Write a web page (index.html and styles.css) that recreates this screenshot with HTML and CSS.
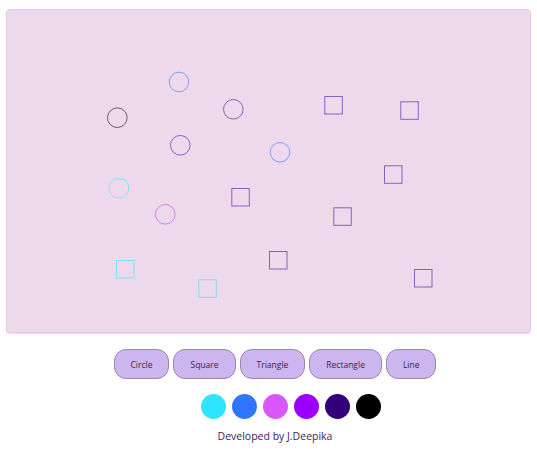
FILE: index.html
```html
<!DOCTYPE html>
<html>
<head>
<meta charset="utf-8">
<link rel="stylesheet" href="styles.css">
</head>
<body>
<div class="page">
  <div class="board">
    <svg class="drawing" viewBox="0 0 525 324" width="525" height="324">
      <g fill="none" stroke-width="1">
        <circle cx="173" cy="73" r="9.8" stroke="#7f9ff7"/>
        <circle cx="111.3" cy="108.7" r="9.8" stroke="#6e5a73"/>
        <circle cx="227.3" cy="100.3" r="9.8" stroke="#8f5fbd"/>
        <circle cx="174.3" cy="136.3" r="9.8" stroke="#8f5fbd"/>
        <circle cx="274" cy="143.3" r="9.8" stroke="#7f9ff7"/>
        <circle cx="113" cy="179.3" r="9.8" stroke="#7fe3f3"/>
        <circle cx="159.3" cy="205.3" r="9.8" stroke="#d880ef"/>
        <rect x="318.8" y="87.5" width="17.5" height="17.5" stroke="#8c5fbf"/>
        <rect x="394.8" y="92.8" width="17.5" height="17.5" stroke="#8c5fbf"/>
        <rect x="378.5" y="156.8" width="17.5" height="17.5" stroke="#8c5fbf"/>
        <rect x="225.8" y="179.5" width="17.5" height="17.5" stroke="#8c5fbf"/>
        <rect x="263.5" y="242.5" width="17.5" height="17.5" stroke="#8c5fbf"/>
        <rect x="110.5" y="251.5" width="17.5" height="17.5" stroke="#80dff2"/>
        <rect x="192.8" y="270.8" width="17.5" height="17.5" stroke="#80dff2"/>
        <rect x="327.8" y="198.8" width="17.5" height="17.5" stroke="#8c5fbf"/>
        <rect x="408.5" y="260.5" width="17.5" height="17.5" stroke="#8c5fbf"/>
      </g>
    </svg>
  </div>
  <div class="tools">
    <button class="tool">Circle</button>
    <button class="tool">Square</button>
    <button class="tool">Triangle</button>
    <button class="tool">Rectangle</button>
    <button class="tool">Line</button>
  </div>
  <div class="colors">
    <span class="swatch c1"></span>
    <span class="swatch c2"></span>
    <span class="swatch c3"></span>
    <span class="swatch c4"></span>
    <span class="swatch c5"></span>
    <span class="swatch c6"></span>
  </div>
  <p class="credit">Developed by J.Deepika</p>
</div>
</body>
</html>
```
FILE: styles.css
```css
html, body {
  margin: 0;
  padding: 0;
  background: #ffffff;
}
body {
  font-family: "Open Sans", "Noto Sans", sans-serif;
}
.page {
  display: flex;
  flex-direction: column;
  align-items: center;
  padding-top: 9px;
}
.board {
  width: 523px;
  height: 322px;
  background: #eed9ec;
  border: 1px solid #e6c9e6;
  border-radius: 4px;
  box-shadow: 0 1px 1px rgba(200, 150, 200, 0.35);
  overflow: hidden;
}
.drawing {
  display: block;
  margin: -1px 0 0 -1px;
}
.tools {
  display: flex;
  gap: 4px;
  margin-top: 16px;
  padding-left: 13px;
}
.tool {
  height: 30px;
  padding: 0 16px;
  background: #cdb5ef;
  border: 1px solid #9d86a6;
  border-radius: 12px;
  font-family: "Open Sans", "Noto Sans", sans-serif;
  font-size: 8.5px;
  color: #3b2452;
  cursor: pointer;
}
.colors {
  display: flex;
  gap: 6px;
  margin-top: 15px;
  padding-left: 45px;
}
.swatch {
  width: 25px;
  height: 25px;
  border-radius: 50%;
  display: block;
}
.c1 { background: #2ee5ff; }
.c2 { background: #2f75ff; }
.c3 { background: #d957ff; }
.c4 { background: #9b00ff; }
.c5 { background: #33007a; }
.c6 { background: #000000; }
.credit {
  margin: 10px 0 0;
  padding-left: 13px;
  font-size: 10.5px;
  color: #3b2262;
}
```
